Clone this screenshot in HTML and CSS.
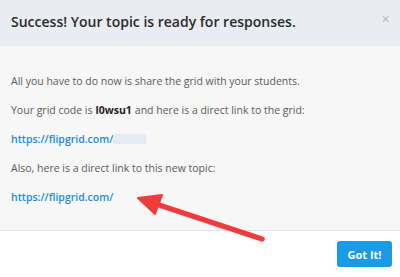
FILE: index.html
```html
<!DOCTYPE html>
<html lang="en">
<head>
    <meta charset="UTF-8">
    <meta name="viewport" content="width=device-width, initial-scale=1.0">
    <title>Topic Ready</title>
    <link rel="stylesheet" href="styles.css">
</head>
<body>
    <div class="modal">
        <div class="modal__header">
            <h2 class="modal__title">Success! Your topic is ready for responses.</h2>
            <span class="modal__close">&#10005;</span>
        </div>
        <div class="modal__body">
            <p class="modal__text">All you have to do now is share the grid with your students.</p>
            <p class="modal__text">Your grid code is <strong class="modal__code">l0wsu1</strong> and here is a direct link to the grid:</p>
            <p class="modal__text"><a href="#" class="modal__link">https://flipgrid.com/</a><span class="modal__redact"></span></p>
            <p class="modal__text">Also, here is a direct link to this new topic:</p>
            <p class="modal__text"><a href="#" class="modal__link">https://flipgrid.com/</a></p>
            <svg class="arrow" width="130" height="50" viewBox="0 0 130 50">
                <line x1="127" y1="46" x2="18" y2="10" stroke="#f03c3c" stroke-width="5.5" stroke-linecap="round"/>
                <polygon points="3,5 27,2 20,21" fill="#f03c3c" stroke="#f03c3c" stroke-width="2" stroke-linejoin="round"/>
            </svg>
        </div>
        <div class="modal__footer">
            <button class="button">Got It!</button>
        </div>
    </div>
</body>
</html>
```

FILE: styles.css
```css
body {
    margin: 0;
    font-family: 'Open Sans', 'Liberation Sans', sans-serif;
    background-color: #fff;
}

.modal {
    width: 400px;
    height: 277px;
    display: flex;
    flex-direction: column;
}

.modal__header {
    height: 46px;
    background-color: #e9edf1;
    display: flex;
    align-items: center;
    justify-content: space-between;
    padding: 0 10px 0 11px;
}

.modal__title {
    margin: 0;
    font-size: 14px;
    font-weight: 600;
    color: #2b2b2b;
    margin-top: -3px;
}

.modal__close {
    color: #bcbcbc;
    font-size: 11px;
    margin-top: -10px;
}

.modal__body {
    position: relative;
    height: 157px;
    background-color: #f7f7f7;
    border-bottom: 1px solid #e4e4e4;
    padding: 27px 11px 0;
    display: flex;
    flex-direction: column;
    gap: 13px;
}

.modal__text {
    margin: 0;
    font-size: 10.5px;
    line-height: 16px;
    color: #5a5a5a;
    display: flex;
    align-items: center;
}

.modal__code {
    color: #222;
    font-weight: 700;
    margin: 0 3px;
}

.modal__link {
    color: #1b8dd6;
    font-weight: 600;
    text-decoration: none;
}

.modal__redact {
    display: inline-block;
    width: 33px;
    height: 10px;
    background-color: #e6ebf3;
}

.arrow {
    position: absolute;
    left: 135px;
    top: 147px;
}

.modal__footer {
    flex: 1;
    display: flex;
    align-items: center;
    justify-content: flex-end;
    padding: 0 8px 0 0;
}

.button {
    width: 55px;
    height: 26px;
    border: none;
    border-radius: 3px;
    background-color: #1a9be6;
    color: #fff;
    font-family: inherit;
    font-size: 11px;
    font-weight: 700;
    cursor: pointer;
}
```
